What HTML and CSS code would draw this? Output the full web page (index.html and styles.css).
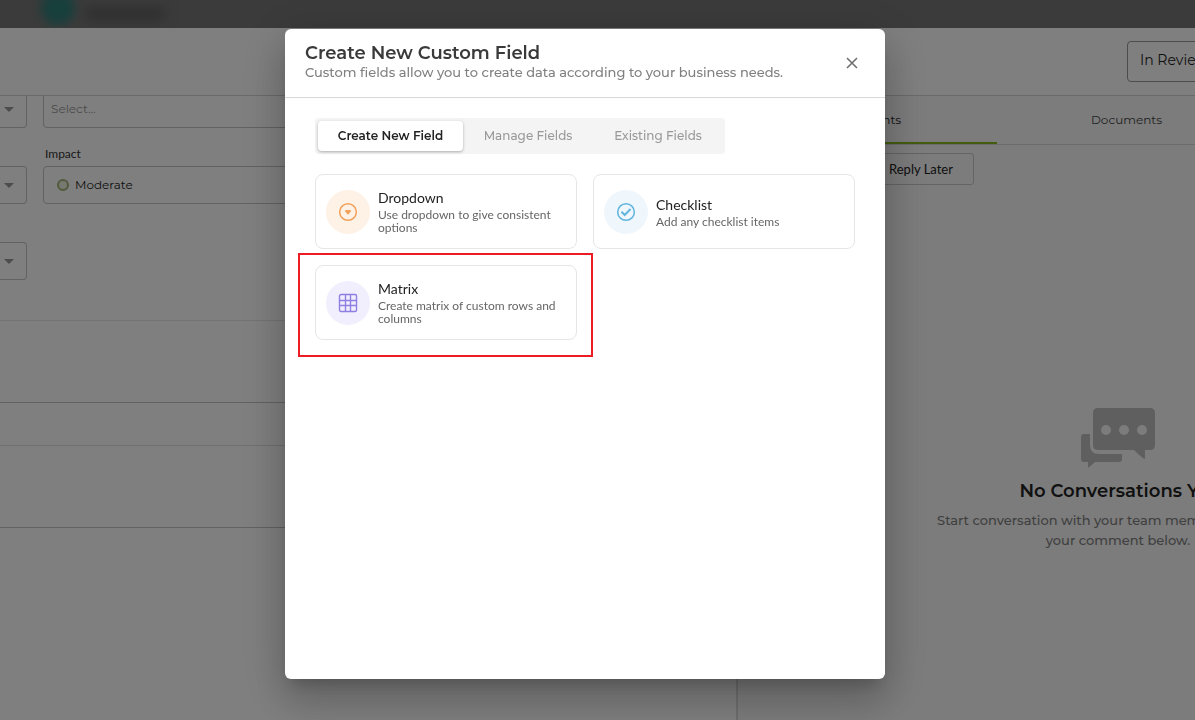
FILE: index.html
```html
<!DOCTYPE html>
<html lang="en">
<head>
    <meta charset="UTF-8">
    <meta name="viewport" content="width=device-width, initial-scale=1.0">
    <title>Create New Custom Field</title>
    <link rel="stylesheet" href="styles.css">
</head>
<body>
    <div class="app">
        <div class="topbar">
            <span class="avatar"></span>
            <span class="user-name"></span>
        </div>

        <header class="page-header">
            <select class="status-select" aria-label="Status">
                <option>In Review</option>
            </select>
        </header>

        <main class="content">
            <section class="details">
                <div class="fields">
                    <div class="field cut"><select aria-label="Category"><option></option></select></div>
                    <div class="field"><select class="placeholder" aria-label="Type"><option>Select...</option></select></div>

                    <div class="field cut"><select aria-label="Likelihood"><option></option></select></div>
                    <div class="field">
                        <label for="impact">Impact</label>
                        <select id="impact" class="with-dot"><option>Moderate</option></select>
                        <span class="dot"></span>
                    </div>

                    <div class="field cut"><select aria-label="Priority"><option></option></select></div>
                </div>
                <div class="panel-row tall"></div>
                <div class="panel-row"></div>
                <div class="panel-row tall"></div>
            </section>

            <aside class="conversations">
                <nav class="side-tabs">
                    <a href="#" class="active">Comments</a>
                    <a href="#">Documents</a>
                </nav>
                <button class="reply-later">Reply Later</button>
                <div class="empty">
                    <svg width="74" height="60" viewBox="0 0 74 60" fill="#bebebe">
                        <path d="M3 26h6v11q0 9 9 9h23v5q0 3-3 3H14l-7 6v-6H3q-3 0-3-3V29q0-3 3-3z"/>
                        <path d="M17 0h52q5 0 5 5v32q0 5-5 5h-5v9q-2 0-11-9H17q-5 0-5-5V5q0-5 5-5z"/>
                        <g fill="#f8f8f8"><circle cx="25" cy="22" r="5"/><circle cx="43" cy="22" r="5"/><circle cx="61" cy="22" r="5"/></g>
                    </svg>
                    <h2>No Conversations Yet</h2>
                    <p>Start conversation with your team members by adding<br>your comment below.</p>
                </div>
            </aside>
        </main>
    </div>

    <div class="overlay">
        <div class="modal" role="dialog" aria-labelledby="modalTitle">
            <div class="modal-header">
                <div class="modal-title">
                    <h1 id="modalTitle">Create New Custom Field</h1>
                    <p>Custom fields allow you to create data according to your business needs.</p>
                </div>
                <button class="close" aria-label="Close">
                    <svg width="12" height="12" viewBox="0 0 12 12" stroke="#707070" stroke-width="1.6"><path d="M1 1l10 10M11 1L1 11"/></svg>
                </button>
            </div>

            <div class="modal-body">
                <div class="tabs">
                    <button class="active">Create New Field</button>
                    <button>Manage Fields</button>
                    <button>Existing Fields</button>
                </div>

                <div class="cards">
                    <button class="card">
                        <span class="icon orange">
                            <svg width="20" height="20" viewBox="0 0 20 20" fill="none" stroke="#f2a25c">
                                <circle cx="10" cy="10" r="8.3" stroke-width="1.5"/>
                                <path d="M8 9h4l-2 2.500z" fill="#f2994a" stroke-width="2" stroke-linejoin="round"/>
                            </svg>
                        </span>
                        <span class="card-text">
                            <strong>Dropdown</strong>
                            <small>Use dropdown to give consistent options</small>
                        </span>
                    </button>

                    <button class="card">
                        <span class="icon blue">
                            <svg width="20" height="20" viewBox="0 0 20 20" fill="none" stroke="#62b5dc">
                                <circle cx="10" cy="10" r="8.3" stroke-width="1.5"/>
                                <path d="M5.500 9.800l3.200 3.200 5.800-6" stroke-width="2"/>
                            </svg>
                        </span>
                        <span class="card-text">
                            <strong>Checklist</strong>
                            <small>Add any checklist items</small>
                        </span>
                    </button>

                    <button class="card highlighted">
                        <span class="icon purple">
                            <svg width="20" height="20" viewBox="0 0 20 20" fill="none" stroke="#8f7fe0" stroke-width="1.4">
                                <rect x="1.5" y="1.5" width="17" height="17" rx="1.5"/>
                                <path d="M7.500 1v18M12.500 1v18M1 7.500h18M1 12.500h18"/>
                            </svg>
                        </span>
                        <span class="card-text">
                            <strong>Matrix</strong>
                            <small>Create matrix of custom rows and columns</small>
                        </span>
                    </button>
                </div>
            </div>
        </div>
    </div>
</body>
</html>
```
FILE: styles.css
```css
* {
    box-sizing: border-box;
}

body {
    margin: 0;
    background: #fff;
    color: #222;
    font-family: Montserrat, Inter, sans-serif;
    font-size: 13px;
    overflow: hidden;
}

h1, h2, p {
    margin: 0;
}

button, select {
    font-family: inherit;
    color: inherit;
    cursor: pointer;
}

.app {
    display: flex;
    flex-direction: column;
    height: 100vh;
}

/* top bar */
.topbar {
    display: flex;
    flex: 0 0 28px;
    align-items: center;
    gap: 10px;
    padding-left: 41px;
    background: #767676;
    overflow: hidden;
}

.avatar {
    width: 34px;
    height: 34px;
    margin-bottom: 12px;
    border-radius: 50%;
    background: #2f7f79;
    filter: blur(5px);
}

.user-name {
    width: 80px;
    height: 14px;
    background: #606060;
    filter: blur(6px);
}

.page-header {
    display: flex;
    flex: 0 0 68px;
    align-items: center;
    justify-content: flex-end;
    border-bottom: 1px solid #d4d4d4;
    overflow: hidden;
}

select {
    appearance: none;
    background: transparent;
    border: 1px solid #c4c4c4;
    border-radius: 4px;
}

.status-select {
    flex: none;
    width: 120px;
    height: 41px;
    margin-right: -52px;
    padding: 0 12px 3px;
    border-color: #999;
    font-size: 14px;
}

.content {
    display: flex;
    flex: 1;
    min-height: 0;
}

/* left side */
.details {
    flex: 1;
    overflow: hidden;
}

.fields {
    display: grid;
    grid-template-columns: 27px 1fr;
    grid-template-rows: 32px 76px 76px;
    column-gap: 16px;
    height: 225px;
    border-bottom: 1px solid #e6e6e6;
}

.field {
    position: relative;
    display: flex;
    flex-direction: column;
    justify-content: flex-end;
    min-height: 0;
}

.field select {
    flex: none;
    width: 100%;
    height: 38px;
    padding: 0 7px 2px;
    font-size: 12px;
}

.field label {
    padding: 0 2px 4px;
    color: #333;
    font-family: Lato, sans-serif;
    font-size: 12px;
    line-height: 16px;
}

.field.cut select {
    border-left: none;
    border-radius: 0 4px 4px 0;
}

.field.cut::after {
    content: "";
    position: absolute;
    right: 13px;
    bottom: 16px;
    border: 5px solid transparent;
    border-top-color: #999;
    border-bottom: none;
}

.field select.placeholder {
    color: #999;
}

.field select.with-dot {
    padding-left: 31px;
}

.dot {
    position: absolute;
    left: 14px;
    bottom: 13px;
    width: 12px;
    height: 12px;
    border: 2px solid #a3b377;
    border-radius: 50%;
    background: #eef2e0;
}

.panel-row {
    height: 43px;
    border-bottom: 1px solid #e0e0e0;
}

.panel-row.tall {
    height: 82px;
    border-color: #c4c4c4;
}

/* right side */
.conversations {
    flex: 0 0 459px;
    border-left: 2px solid #dcdcdc;
    background: #f8f8f8;
    overflow: hidden;
}

.side-tabs {
    display: flex;
    width: 760px;
    height: 49px;
    border-bottom: 1px solid #d8d8d8;
}

.side-tabs a {
    flex: 0 0 259px;
    color: #444;
    font-size: 12px;
    line-height: 47px;
    text-align: center;
    text-decoration: none;
}

.side-tabs a.active {
    color: #222;
    border-bottom: 2px solid #88b820;
}

.reply-later {
    display: block;
    width: 110px;
    height: 32px;
    margin: 8px 0 0 126px;
    padding: 0 2px 0 6px;
    border: 1px solid #c8c8c8;
    border-radius: 3px;
    background: transparent;
    font-family: Lato, sans-serif;
    font-size: 13px;
}

.empty {
    width: 760px;
    padding-top: 223px;
    text-align: center;
}

.empty svg {
    display: block;
    margin: 0 auto;
}

.empty h2 {
    margin: 12px 0 8px;
    font-size: 18px;
    font-weight: 600;
    line-height: 22px;
}

.empty p {
    color: #808080;
    font-weight: 500;
    line-height: 20px;
}

/* modal */
.overlay {
    position: fixed;
    inset: 0;
    display: flex;
    justify-content: center;
    align-items: flex-start;
    padding: 29px 25px 0 0;
    background: rgba(0, 0, 0, 0.5);
}

.modal {
    width: 600px;
    min-height: 650px;
    border-radius: 6px;
    background: #fff;
    box-shadow: 0 11px 15px -7px rgba(0, 0, 0, 0.2), 0 24px 38px 3px rgba(0, 0, 0, 0.14), 0 9px 46px 8px rgba(0, 0, 0, 0.12);
}

.modal-header {
    display: flex;
    justify-content: space-between;
    align-items: center;
    height: 69px;
    padding: 0 20px;
    border-bottom: 1px solid #d8d8d8;
}

.modal-title {
    padding-bottom: 4px;
}

.modal-header h1 {
    color: #3a3a3a;
    font-size: 18px;
    font-weight: 600;
    line-height: 22px;
}

.modal-header p {
    color: #808080;
    font-weight: 500;
    line-height: 16px;
}

.close {
    display: flex;
    padding: 7px;
    border: none;
    background: none;
}

.modal-body {
    padding: 20px 30px;
}

.tabs {
    display: flex;
    width: 410px;
    height: 36px;
    padding: 3px;
    border-radius: 4px;
    background: #f4f4f4;
}

.tabs button {
    flex: 0 0 130px;
    padding: 0 0 2px;
    border: none;
    border-radius: 4px;
    background: none;
    color: #999;
    font-size: 12px;
    font-weight: 500;
}

.tabs button.active {
    flex-basis: 145px;
    background: #fff;
    color: #222;
    font-weight: 600;
    box-shadow: 0 1px 3px rgba(0, 0, 0, 0.3);
}

.cards {
    display: grid;
    grid-template-columns: 1fr 1fr;
    grid-auto-rows: 75px;
    gap: 16px;
    margin-top: 20px;
}

.card {
    position: relative;
    display: flex;
    align-items: center;
    gap: 8px;
    padding: 0 10px;
    border: 1px solid #e6e6e6;
    border-radius: 8px;
    background: #fff;
    font-family: Lato, sans-serif;
    text-align: left;
}

.icon {
    display: flex;
    flex: 0 0 44px;
    height: 44px;
    align-items: center;
    justify-content: center;
    border-radius: 50%;
}

.orange {
    background: #fef2e6;
}

.blue {
    background: #eff7fd;
}

.purple {
    background: #f1effe;
}

.card-text strong, .card-text small {
    display: block;
}

.card-text strong {
    margin-bottom: 1px;
    color: #222;
    font-size: 14px;
    font-weight: 400;
    line-height: 18px;
}

.card-text small {
    color: #666;
    font-size: 12px;
    line-height: 13px;
}

/* red frame around the matrix card */
.highlighted::after {
    content: "";
    position: absolute;
    inset: -13px -17px -18px -18px;
    border: 2px solid #ed1c24;
}
```
